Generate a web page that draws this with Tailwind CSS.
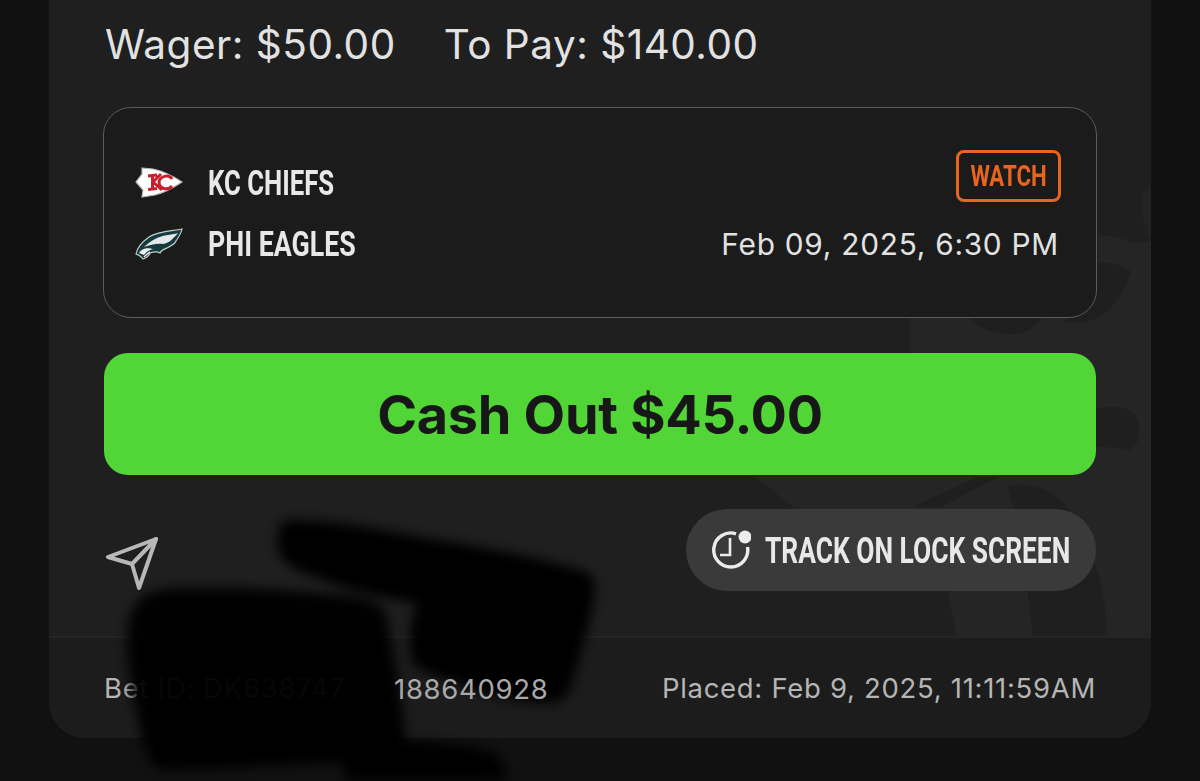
<!doctype html>
<html>
<head>
<meta charset="utf-8">
<script src="https://cdn.jsdelivr.net/npm/@tailwindcss/browser@4"></script>
</head>
<body class="m-0">
<div class="relative w-[1200px] h-[781px] overflow-hidden bg-[#111111] font-['Inter','Liberation_Sans',sans-serif]">
  <div class="relative mx-[49px] h-[738px] rounded-b-[36px] bg-[#1d1d1d] overflow-hidden flex flex-col">
    <!-- watermark -->
    <svg class="absolute left-0 top-0" width="1102" height="636" viewBox="49 0 1102 636" fill="none">
      <rect x="49" width="1102" height="636" fill="#1f1f1f"/>
      <path d="M1098 236C1120 232 1135 250 1151 240V636H957L947 590H800L793 507L755 477V353H910V318H1098Z" fill="#252525"/>
      <path d="M1142 193C1146 190 1150 188 1151 186V240C1146 238 1140 215 1142 193Z" fill="#232323"/>
      <g fill="#1f1f1f">
        <path d="M1090 260L1098 262C1115 262 1128 268 1131 272C1125 290 1115 310 1093 320C1080 324 1070 322 1063 322L1090 300Z"/>
        <path d="M967 316C985 335 1025 345 1043 316Z"/>
        <path d="M1090 410C1115 405 1130 405 1138 420C1142 435 1138 445 1130 450C1120 447 1105 447 1090 447Z"/>
        <path d="M913 507L977 477H998L940 507Z"/>
        <path d="M1007 487C1030 480 1055 490 1067 507L1097 570C1103 590 1107 610 1107 640H1033C1030 610 1027 590 1027 570L1015 510Z"/>
      </g>
    </svg>
    <div class="relative flex-1 px-[54px] pt-[21px] flex flex-col">
      <div class="flex gap-[48px] text-[40.500px] leading-[48px] ml-[2px] tracking-[0.5px] text-[#e2e2e2]">
        <span>Wager: $50.00</span><span>To Pay: $140.00</span>
      </div>
      <div class="mt-[38px] h-[211px] rounded-[28px] border border-[#5c5c5c] bg-[#1b1b1b] pl-[31px] pr-[35px] flex justify-between">
        <div class="flex flex-col pt-[59px] gap-[29px]">
          <div class="flex items-center gap-[25px] h-[32px]">
            <svg width="48" height="32" viewBox="0 0 48 32">
              <path d="M7 1L18 2C28 4 38 9 47 15C38 21 28 26 20 28L7 30L8 23L1 15L7 7Z" fill="#fff" stroke="#b8b8b8" stroke-width="1.200"/>
              <path d="M13 9L22 8M17.500 8.500L17.500 22M13 22.500L22 21.500M18 15L26 7M18 15L27 23" stroke="#c8202f" stroke-width="3" fill="none"/>
              <path d="M37 12C34 7 25 9 24 15C24 22 33 24 37 19" stroke="#c8202f" stroke-width="3" fill="none"/>
            </svg>
            <span class="inline-block w-[125px] mt-[2px] whitespace-nowrap origin-left scale-x-[0.735] font-['Roboto',sans-serif] font-bold text-[35px] leading-[32px] text-[#e8e8e8]">KC CHIEFS</span>
          </div>
          <div class="flex items-center gap-[25px] h-[32px]">
            <svg width="48" height="32" viewBox="0 0 48 32">
              <path d="M47 1C38 3 24 3 14 9C7 14 2 20 1 26C4 27 6 28 8 31C11 30 14 28 15 25C18 24 22 23 25 25C26 22 30 21 32 20C36 18 40 16 41 13C43 10 46 6 47 1Z" fill="#143c3e" stroke="#c3cdcf" stroke-width="1.200"/>
              <path d="M43 5C36 7 27 7 20 11C15 14 12 16 9 19C15 17 22 15 28 16C34 15 38 11 43 5Z" fill="#e4e9e9"/>
              <path d="M4 25C6 21 12 19 18 21C14 22 11 24 9 27Z" fill="#eef1f1"/>
              <path d="M9 29C11 27 13 25 15 24" stroke="#dfe5e5" stroke-width="1.500" fill="none"/>
            </svg>
            <span class="inline-block w-[148px] mt-[2px] whitespace-nowrap origin-left scale-x-[0.765] font-['Roboto',sans-serif] font-bold text-[35px] leading-[32px] text-[#e8e8e8]">PHI EAGLES</span>
          </div>
        </div>
        <div class="flex flex-col items-end pt-[42px]">
          <div class="w-[105px] h-[52px] rounded-[8px] border-[3px] border-[#e8641f] flex items-center justify-center">
            <span class="inline-block whitespace-nowrap scale-x-[0.74] font-['Roboto',sans-serif] font-bold text-[30px] leading-[30px] text-[#e8641f]">WATCH</span>
          </div>
          <div class="mt-[24px] mr-[2px] text-[29.800px] leading-[36px] tracking-[0.75px] text-[#e2e2e2]">Feb 09, 2025, 6:30 PM</div>
        </div>
      </div>
      <div class="mt-[35px] h-[122px] ml-[1px] mr-[1px] rounded-[24px] bg-[#52d637] flex items-center justify-center text-[54px] tracking-[-0.3px] font-bold text-[#171717]">Cash Out $45.00</div>
      <div class="mt-[34px] flex items-center justify-between pl-[3px] mr-[1px]">
        <svg width="54" height="54" viewBox="0 0 54 54" fill="none" stroke="#b8b8b8" stroke-width="4" stroke-linejoin="round" stroke-linecap="round" class="mt-[26px]">
          <path d="M50 3L2 21L26 28L33 52Z"/><path d="M50 3L26 28"/>
        </svg>
        <div class="w-[410px] h-[82px] rounded-full bg-[#3a3a3a] flex items-center pl-[25px] gap-[14px]">
          <svg width="40" height="40" viewBox="0 0 40 40" fill="none" stroke="#ececec" stroke-width="3.400">
            <path d="M25 3.800A17 17 0 1 0 36.500 17"/>
            <path d="M19 8V25H9" stroke-width="2.600"/>
            <circle cx="34" cy="7" r="6.500" fill="#ececec" stroke="none"/>
          </svg>
          <span class="inline-block w-[305px] mt-[2px] whitespace-nowrap origin-left scale-x-[0.732] font-['Roboto',sans-serif] font-bold text-[36px] leading-[36px] text-[#e8e8e8]">TRACK ON LOCK SCREEN</span>
        </div>
      </div>
    </div>
    <div class="relative h-[102px] border-t-2 border-[#252525] bg-[#1c1c1c] px-[55px] pt-[2px] flex items-center justify-between text-[27.500px] tracking-[0.7px] text-[#b5b5b5]">
      <span class="whitespace-nowrap">Bet ID: DK638747</span>
      <span class="whitespace-nowrap">Placed: Feb 9, 2025, 11:11:59AM</span>
    </div>
  </div>
  <!-- scribble over the lower part -->
  <svg class="absolute left-0 top-0 blur-[6px]" width="1200" height="781" viewBox="0 0 1200 781">
    <path d="M283 521C330 518 380 530 425 538C490 548 540 558 587 572C596 578 595 590 594 597C590 625 580 655 573 679C570 695 560 703 549 703C515 702 485 695 459 683C430 675 411 668 411 655C408 635 412 615 418 603C380 598 350 590 321 579C300 572 278 562 278 548C277 532 280 525 283 521Z" fill="#000"/>
    <path d="M139 600C150 590 165 588 183 588C240 587 300 590 356 597C375 600 385 608 387 617C395 660 402 700 406 741C440 742 475 745 494 753C505 760 507 770 507 790H349C345 780 343 770 342 762C280 765 220 770 156 769C146 755 142 740 139 724C133 695 128 670 127 648C127 625 130 610 139 600Z" fill="#000" fill-opacity="0.97"/>
  </svg>
  <span class="absolute left-[394px] top-[673px] text-[27.500px] leading-[32px] tracking-[0.7px] text-[#a9a9a9]">188640928</span>
</div>
</body>
</html>
